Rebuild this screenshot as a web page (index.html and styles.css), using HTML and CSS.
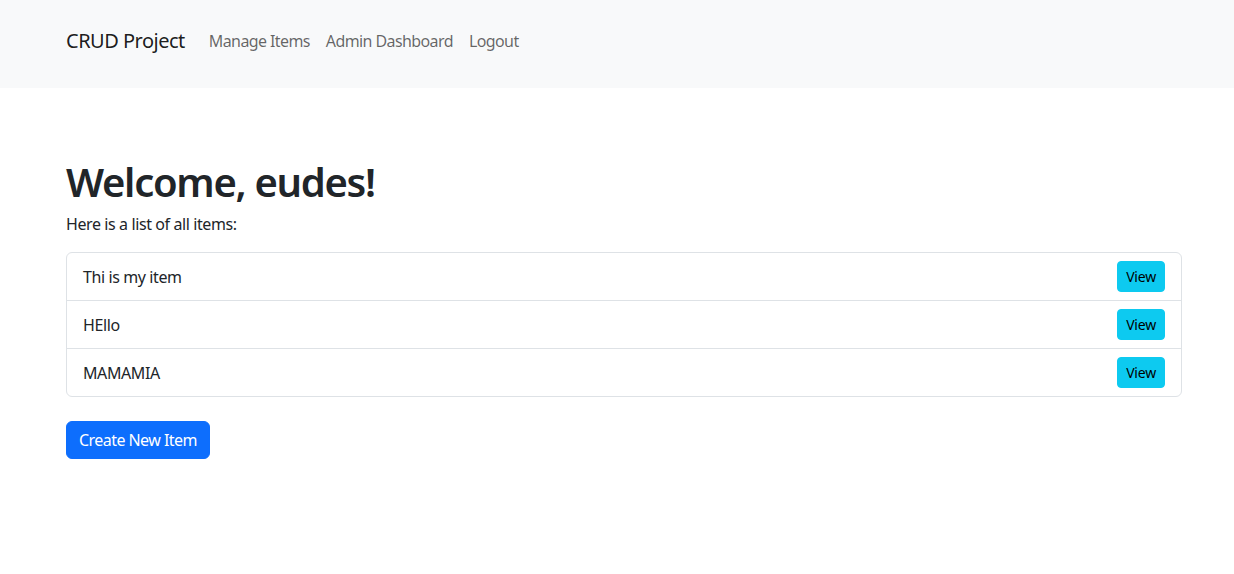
FILE: index.html
```html
<!DOCTYPE html>
<html lang="en">
<head>
<meta charset="utf-8">
<title>CRUD Project</title>
<link rel="stylesheet" href="styles.css">
</head>
<body>
<nav class="navbar">
  <div class="container nav-inner">
    <a class="brand" href="#">CRUD Project</a>
    <ul class="nav-links">
      <li><a href="#">Manage Items</a></li>
      <li><a href="#">Admin Dashboard</a></li>
      <li><a href="#">Logout</a></li>
    </ul>
  </div>
</nav>
<main class="container main">
  <h1 class="title">Welcome, eudes!</h1>
  <p class="lead-text">Here is a list of all items:</p>
  <ul class="list">
    <li class="list-item"><span>Thi is my item</span><a class="btn-view" href="#">View</a></li>
    <li class="list-item"><span>HEllo</span><a class="btn-view" href="#">View</a></li>
    <li class="list-item"><span>MAMAMIA</span><a class="btn-view" href="#">View</a></li>
  </ul>
  <a class="btn-primary" href="#">Create New Item</a>
</main>
</body>
</html>
```
FILE: styles.css
```css
* { box-sizing: border-box; }
html, body { margin: 0; padding: 0; }
body {
  font-family: "Noto Sans", "Open Sans", sans-serif;
  font-size: 16px;
  line-height: 1.5;
  letter-spacing: -0.4px;
  color: #212529;
  background: #fff;
}
a { text-decoration: none; }
.container {
  width: 1116px;
  margin-left: 66px;
}
.navbar {
  background: #f8f9fa;
  height: 88px;
  display: flex;
  align-items: center;
  padding-bottom: 6px;
}
.nav-inner {
  display: flex;
  align-items: center;
}
.brand {
  font-size: 20px;
  line-height: 30px;
  color: rgba(0,0,0,.9);
  margin-right: 16px;
  letter-spacing: -0.5px;
}
.nav-links {
  list-style: none;
  margin: 0;
  padding: 0;
  display: flex;
}
.nav-links a {
  display: block;
  padding: 8px 8px;
  color: rgba(0,0,0,.6);
  letter-spacing: -0.6px;
}
.main {
  padding-top: 70px;
}
.title {
  font-size: 40px;
  font-weight: 600;
  line-height: 48px;
  letter-spacing: -1.3px;
  margin: 0 0 6px;
}
.lead-text {
  margin: 0 0 16px;
}
.list {
  list-style: none;
  margin: 0;
  padding: 0;
  border: 1px solid #dee2e6;
  border-radius: 6px;
}
.list-item {
  display: flex;
  justify-content: space-between;
  align-items: center;
  padding: 8px 16px;
  border-top: 1px solid #dee2e6;
}
.list-item:first-child { border-top: 0; }
.btn-view {
  display: inline-block;
  background: #0dcaf0;
  border: 1px solid #0dcaf0;
  color: #000;
  font-size: 14px;
  line-height: 21px;
  padding: 4px 8px;
  border-radius: 4px;
  letter-spacing: -0.2px;
}
.btn-primary {
  display: inline-block;
  margin-top: 24px;
  background: #0d6efd;
  border: 1px solid #0d6efd;
  color: #fff;
  padding: 6px 12px;
  border-radius: 6px;
  line-height: 24px;
  letter-spacing: -0.55px;
}
```
